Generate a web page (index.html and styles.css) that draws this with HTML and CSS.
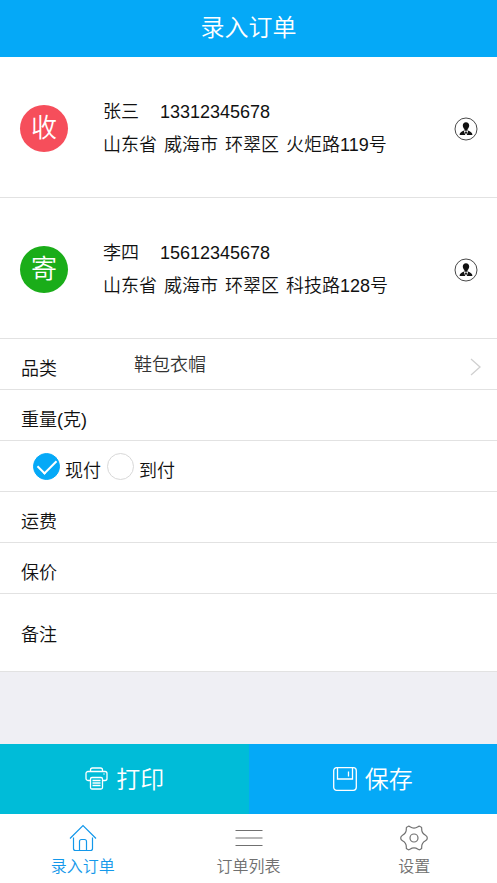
FILE: index.html
```html
<!DOCTYPE html>
<html lang="zh-CN">
<head>
    <meta charset="UTF-8">
    <meta name="viewport" content="width=device-width, initial-scale=1.0">
    <title>录入订单</title>
    <link rel="stylesheet" href="styles.css">
</head>
<body>
    <header class="header">
        <h1>录入订单</h1>
    </header>

    <form class="order" id="orderForm">
        <!-- Receiver -->
        <section class="party">
            <div class="badge badge-receive">收</div>
            <div class="party-info">
                <div class="contact"><span>张三</span><span>13312345678</span></div>
                <div class="address"><span>山东省</span><span>威海市</span><span>环翠区</span><span>火炬路119号</span></div>
            </div>
            <button type="button" class="pick" aria-label="选择收件人">
                <svg viewBox="0 0 24 24" width="24" height="24">
                    <circle cx="12" cy="12" r="11" fill="none" stroke="#333" stroke-width=".9"/>
                    <path fill="#111" d="M12 5.200c2 0 3.200 1.300 3.200 3.200 0 1.500-.8 2.900-1.600 3.700v1.600h-3.200v-1.600C9.600 11.300 8.800 9.900 8.800 8.400c0-1.900 1.200-3.200 3.200-3.200zM9.800 13.600l1.400 4.400H5.600c0-2.200 1.400-2.700 4.200-4.400zM14.200 13.600c2.800 1.700 4.200 2.200 4.200 4.400h-5.600zM11.300 14.600h1.400l.3 1.200-1 1.700-1-1.700z"/>
                </svg>
            </button>
        </section>

        <!-- Sender -->
        <section class="party">
            <div class="badge badge-send">寄</div>
            <div class="party-info">
                <div class="contact"><span>李四</span><span>15612345678</span></div>
                <div class="address"><span>山东省</span><span>威海市</span><span>环翠区</span><span>科技路128号</span></div>
            </div>
            <button type="button" class="pick" aria-label="选择寄件人">
                <svg viewBox="0 0 24 24" width="24" height="24">
                    <circle cx="12" cy="12" r="11" fill="none" stroke="#333" stroke-width=".9"/>
                    <path fill="#111" d="M12 5.200c2 0 3.200 1.300 3.200 3.200 0 1.500-.8 2.900-1.600 3.700v1.600h-3.200v-1.600C9.600 11.300 8.800 9.900 8.800 8.400c0-1.900 1.200-3.200 3.200-3.200zM9.800 13.600l1.400 4.400H5.600c0-2.200 1.400-2.700 4.200-4.400zM14.200 13.600c2.800 1.700 4.200 2.200 4.200 4.400h-5.600zM11.300 14.600h1.400l.3 1.200-1 1.700-1-1.700z"/>
                </svg>
            </button>
        </section>

        <div class="row">
            <label for="category">品类</label>
            <select id="category">
                <option>鞋包衣帽</option>
            </select>
            <svg class="chevron" viewBox="0 0 11 18" width="11" height="18">
                <path d="M1 1l9 8-9 8" fill="none" stroke="#d0d0d0" stroke-width="1.300"/>
            </svg>
        </div>
        <div class="row">
            <label for="weight">重量(克)</label>
            <input type="text" id="weight" inputmode="numeric">
        </div>
        <div class="row row-pay">
            <input type="radio" name="pay" id="payNow" checked>
            <label for="payNow">现付</label>
            <input type="radio" name="pay" id="payLater">
            <label for="payLater">到付</label>
        </div>
        <div class="row">
            <label for="freight">运费</label>
            <input type="text" id="freight">
        </div>
        <div class="row">
            <label for="insured">保价</label>
            <input type="text" id="insured">
        </div>
        <div class="row row-remark">
            <label for="remark">备注</label>
            <input type="text" id="remark">
        </div>
    </form>

    <div class="actions">
        <button type="button" class="print">
            <svg viewBox="0 0 24 24" width="24" height="24" fill="none" stroke="#fff" stroke-width="1.300">
                <path d="M6.500 4.500V3a2 2 0 0 1 2-2h8a2 2 0 0 1 2 2v1.500"/>
                <path d="M6.500 13.500H4a2 2 0 0 1-2-2v-5a2 2 0 0 1 2-2h17a2 2 0 0 1 2 2v5a2 2 0 0 1-2 2h-2.500"/>
                <rect x="6.500" y="10.500" width="12" height="11.500" rx="1.500"/>
                <path d="M8.500 13.500h8M8.500 16h8M8.500 18.500h8M19.500 7h1"/>
            </svg>
            <span>打印</span>
        </button>
        <button type="submit" form="orderForm" class="save">
            <svg viewBox="0 0 24 24" width="24" height="24" fill="none" stroke="#fff" stroke-width="1.300">
                <rect x=".7" y=".7" width="22.600" height="22.600" rx="3"/>
                <path d="M4.500 1v11h15V1M15.500 4.500v5"/>
            </svg>
            <span>保存</span>
        </button>
    </div>

    <nav class="tabs">
        <a href="#" class="active">
            <svg viewBox="0 0 28 28" width="28" height="28" fill="none" stroke="currentColor" stroke-width="1.200">
                <path d="M1 14.500L14 1.500l13 13M4.500 13.500v11a2 2 0 0 0 2 2h15a2 2 0 0 0 2-2v-11"/>
                <path d="M10.500 26.500v-9a2 2 0 0 1 2-2h3a2 2 0 0 1 2 2v9"/>
            </svg>
            <span>录入订单</span>
        </a>
        <a href="#">
            <svg viewBox="0 0 28 28" width="28" height="28" fill="none" stroke="currentColor" stroke-width="1.200">
                <path d="M.5 6.500h27M.5 14h27M.5 21.500h27"/>
            </svg>
            <span>订单列表</span>
        </a>
        <a href="#">
            <svg viewBox="0 0 28 28" width="28" height="28" fill="none" stroke="currentColor" stroke-width="1.200">
                <path d="M8 2.500Q9 1.800 10 2.800Q14 5.500 18 2.800Q19 1.800 20 2.500L21 3Q22 3.500 21.700 5Q21.500 9 25.500 11.200Q27.300 12.200 27.300 14Q27.300 15.800 25.500 16.800Q21.500 19 21.700 23Q22 24.500 21 25L20 25.500Q19 26.200 18 25.200Q14 22.500 10 25.200Q9 26.200 8 25.500L7 25Q6 24.500 6.300 23Q6.500 19 2.500 16.800Q.7 15.800 .7 14Q.7 12.200 2.500 11.200Q6.500 9 6.300 5Q6 3.500 7 3Z"/>
                <circle cx="14" cy="14" r="4"/>
            </svg>
            <span>设置</span>
        </a>
    </nav>
</body>
</html>
```

FILE: styles.css
```css
* {
    box-sizing: border-box;
}

body {
    margin: 0;
    min-height: 100vh;
    display: flex;
    flex-direction: column;
    background-color: #efeff4;
    color: #111;
    font-family: "Liberation Sans", "Noto Sans CJK SC", sans-serif;
    font-size: 18px;
    font-weight: 350;
}

button,
input,
select {
    margin: 0;
    padding: 0;
    border: none;
    background: none;
    color: inherit;
    font: inherit;
}

svg {
    display: block;
}

.header {
    height: 57px;
    display: flex;
    align-items: center;
    justify-content: center;
    padding-bottom: 2px;
    background-color: #05a9f7;
    color: #fff;
}

.header h1 {
    margin: 0;
    font-size: 24px;
    font-weight: 350;
    line-height: 36px;
}

/* Fills the free space so the buttons stay at the bottom */
.order {
    flex: 1;
}

/* Receiver and sender blocks */
.party {
    height: 141px;
    display: flex;
    align-items: center;
    padding: 3px 19px 0 20px;
    background-color: #fff;
    border-bottom: 1px solid #e2e2e2;
}

.badge {
    width: 48px;
    height: 47px;
    border-radius: 50%;
    color: #fff;
    font-size: 26px;
    line-height: 47px;
    text-align: center;
}

.badge-receive {
    background-color: #f64e5b;
}

.badge-send {
    background-color: #1aad19;
}

.party-info {
    flex: 1;
    margin-left: 35px;
    line-height: 33px;
}

.contact,
.address {
    display: flex;
    flex-wrap: wrap;
    column-gap: 7px;
}

.contact {
    column-gap: 21px;
}

.pick {
    cursor: pointer;
}

/* Form rows */
.row {
    height: 51px;
    display: flex;
    align-items: center;
    padding: 6px 16px 0 21px;
    background-color: #fff;
    border-bottom: 1px solid #e2e2e2;
}

.row label {
    width: 113px;
}

.row select,
.row input[type="text"] {
    flex: 1;
    min-width: 0;
    outline: none;
}

.row select {
    appearance: none;
    padding-bottom: 5px;
    color: #333;
}

.row-pay {
    padding-left: 33px;
}

.row-pay label {
    width: auto;
    margin: 0 6px 0 5px;
}

.row-pay input {
    appearance: none;
    width: 27px;
    height: 27px;
    display: flex;
    justify-content: center;
    margin-bottom: 6px;
    border: 1px solid #d8d8d8;
    border-radius: 50%;
}

.row-pay input:checked {
    border-color: #05a9f7;
    background-color: #05a9f7;
}

/* Tick */
.row-pay input:checked::after {
    content: "";
    width: 16px;
    height: 9px;
    margin-top: 5px;
    border-left: 2px solid #fff;
    border-bottom: 2px solid #fff;
    transform: rotate(-45deg);
}

.row-remark {
    height: 78px;
    padding-top: 0;
}

/* Print and save */
.actions {
    display: flex;
}

.actions button {
    flex: 1;
    height: 70px;
    display: flex;
    align-items: center;
    justify-content: center;
    gap: 8px;
    color: #fff;
    font-size: 24px;
    cursor: pointer;
}

.actions span {
    padding-bottom: 4px;
}

.print {
    background-color: #00bcd8;
}

.save {
    background-color: #05a9f7;
}

/* Bottom tabs */
.tabs {
    height: 69px;
    display: flex;
    background-color: #fff;
}

.tabs a {
    flex: 1;
    display: flex;
    flex-direction: column;
    align-items: center;
    padding-top: 10px;
    color: #707070;
    font-size: 16px;
    line-height: 30px;
    text-decoration: none;
}

.tabs a.active {
    color: #1398ea;
}
```
